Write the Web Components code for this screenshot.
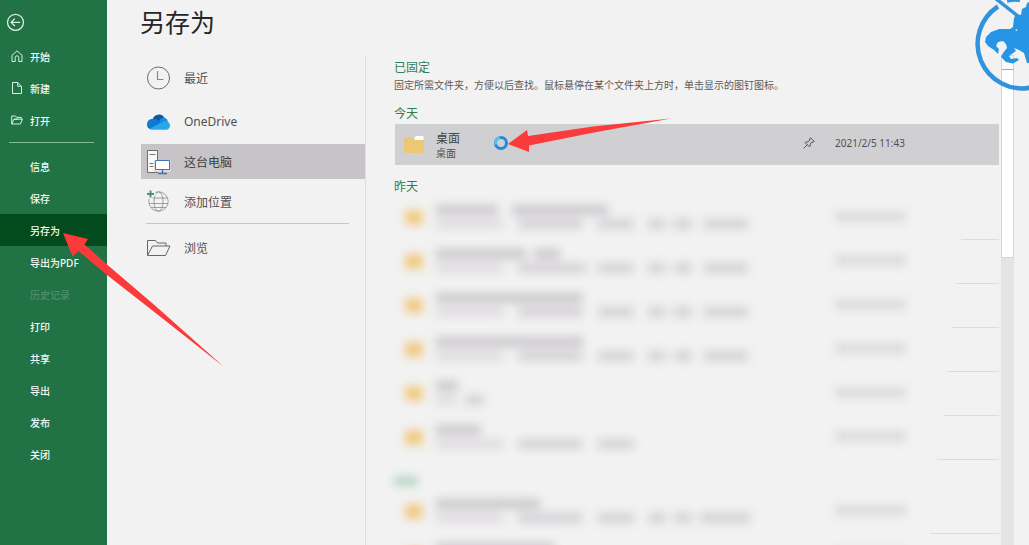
<!DOCTYPE html>
<html lang="zh-CN">
<head>
<meta charset="utf-8">
<meta name="viewport" content="width=device-width, initial-scale=1">
<title>另存为</title>
<style>
    body {
        margin: 0;
        background: #f2f2f2;
        font-family: "Noto Sans", "Noto Sans CJK SC", sans-serif;
    }
</style>
</head>
<body>
<save-backstage></save-backstage>

<script>
const define = (name, html, setup) => {
    const template = document.createElement('template');
    template.innerHTML = html;

    customElements.define(name, class extends HTMLElement {
        constructor() {
            super();
            this.attachShadow({ mode: 'open' });
            this.shadowRoot.appendChild(template.content.cloneNode(true));
        }

        connectedCallback() {
            if (setup) setup(this, this.shadowRoot);
        }
    });
};

// sidebar entry
define('nav-item', `
    <style>
        :host { display: block; }

        a {
            display: grid;
            grid-template-columns: 14px 1fr;
            gap: 6px;
            align-items: center;
            height: 32px;
            padding-left: 10px;
            color: #f4faf6;
            font-size: 10px;
            font-weight: 500;
            text-decoration: none;
            white-space: nowrap;
        }

        :host([selected]) a { background: #034a1c; }
        :host([disabled]) a { color: #4f8f6a; }
        ::slotted(svg) { display: block; }
        .label { grid-column: 2; }
    </style>
    <a href="#"><slot name="icon"></slot><span class="label"><slot></slot></span></a>
`, (host, root) => {
    const link = root.querySelector('a');
    if (host.hasAttribute('selected')) link.setAttribute('aria-current', 'page');
    if (host.hasAttribute('disabled')) link.setAttribute('aria-disabled', 'true');
});

define('side-nav', `
    <style>
        :host {
            display: block;
            background: #217346;
        }

        .back {
            display: block;
            width: 20px;
            height: 20px;
            margin: 12px 0 8px 5px;
            padding: 0;
            border: 0;
            background: none;
        }

        hr {
            margin: 6px 13px 7px 9px;
            border: 0;
            border-top: 1px solid #7fbf98;
        }

        svg { display: block; fill: none; stroke: #d9efe1; }
        nav { display: flow-root; }
    </style>
    <nav>
        <button class="back" aria-label="返回">
            <svg width="20" height="20" viewBox="0 0 20 20" stroke-width="1.3">
                <circle cx="10.5" cy="10.3" r="8"/>
                <path d="M15.2 10.3H6.2M9.8 6.6 6.1 10.3l3.7 3.7"/>
            </svg>
        </button>
        <nav-item>
            <svg slot="icon" width="14" height="14" viewBox="0 0 14 14" fill="none" stroke="#d9efe1">
                <path d="M2 6.3 7 1.8l5 4.5v6.2H8.8V8.6a1.8 1.8 0 0 0-3.6 0v3.9H2z"/>
            </svg>开始</nav-item>
        <nav-item>
            <svg slot="icon" width="14" height="14" viewBox="0 0 14 14" fill="none" stroke="#d9efe1">
                <path d="M2.5 1.5h5.2l3.8 3.8v7.2h-9zM7.7 1.5v3.8h3.8"/>
            </svg>新建</nav-item>
        <nav-item>
            <svg slot="icon" width="14" height="14" viewBox="0 0 14 14" fill="none" stroke="#d9efe1">
                <path d="M1.7 11V3h3.8l1.2 1.4h4.6v1.8M1.7 11l2.2-4.8h8.6L10.4 11zM4 6.2h3.2L8.4 5"/>
            </svg>打开</nav-item>
        <hr>
        <nav-item>信息</nav-item>
        <nav-item>保存</nav-item>
        <nav-item selected>另存为</nav-item>
        <nav-item>导出为PDF</nav-item>
        <nav-item disabled>历史记录</nav-item>
        <nav-item>打印</nav-item>
        <nav-item>共享</nav-item>
        <nav-item>导出</nav-item>
        <nav-item>发布</nav-item>
        <nav-item>关闭</nav-item>
    </nav>
`);

// save location
define('place-item', `
    <style>
        :host { display: block; }

        button {
            display: grid;
            grid-template-columns: 26px 1fr;
            gap: 12px;
            align-items: center;
            width: 100%;
            height: 35px;
            padding: 0 0 0 5px;
            border: 0;
            background: none;
            color: #505050;
            font: inherit;
            font-size: 12px;
            text-align: left;
        }

        :host([selected]) button { background: #c6c4c7; color: #404040; }
        ::slotted(svg) { display: block; }
    </style>
    <button><slot name="icon"></slot><span><slot></slot></span></button>
`);

define('place-list', `
    <style>
        :host {
            display: grid;
            align-content: start;
            gap: 5px;
            padding-top: 5px;
            border-right: 1px solid #dedede;
        }

        .recent { margin-bottom: 4px; }

        hr {
            width: calc(100% - 21px);
            box-sizing: border-box;
            margin: -1px 0 1px 5px;
            border: 0;
            border-top: 1px solid #c6c6c6;
        }
    </style>
    <place-item class="recent">
        <svg slot="icon" width="26" height="26" viewBox="0 0 26 26" fill="none" stroke="#6a6a6a">
            <circle cx="12.5" cy="13" r="11"/>
            <path d="M11.5 6v8.5h6" stroke="#8a8a8a" stroke-width="1.2"/>
        </svg>最近</place-item>
    <place-item>
        <svg slot="icon" width="26" height="26" viewBox="0 0 26 26">
            <path d="M6.5 10.5A6.5 6.5 0 0 1 18.5 9l-2 7z" fill="#0c59a4"/>
            <path d="M1 15.5a5.2 5.2 0 0 1 6-5.5c2-.5 3.500.2 5 1.200l6 5-13 4.300A5 5 0 0 1 1 15.500z" fill="#0f78d4"/>
            <path d="M13 12.5c1-3 3.500-4.300 6-3.500 1.600.5 2.500 1.800 2.700 3.500l.3 5z" fill="#1490df"/>
            <path d="M4 19.5 14.500 14l4-1.500a4.200 4.200 0 0 1 5.500 4c0 2.500-1.700 4.200-4 4.200H7c-1.200 0-2.200-.4-3-1.200z" fill="#28a8ea"/>
        </svg>OneDrive</place-item>
    <place-item selected>
        <svg slot="icon" width="26" height="26" viewBox="0 0 26 26">
            <path d="M1.5 1.5h10v22h-10z" fill="#f7f7f7" stroke="#6d6d6d"/>
            <path d="M3.5 5.5h6M3.5 14.5h4M3.5 17.5h4" stroke="#777" fill="none"/>
            <path d="M8 11.5h16.5V23H8z" fill="#dedede"/>
            <path d="M9.5 11.5h14v9h-14z" fill="#fff" stroke="#4472b5"/>
            <path d="M16.5 20.5V24M12 24.5h9" stroke="#4472b5" stroke-width="1.5" fill="none"/>
        </svg>这台电脑</place-item>
    <place-item>
        <svg slot="icon" width="26" height="26" viewBox="0 0 26 26" fill="none" stroke="#8c8c8c" stroke-width=".8">
            <circle cx="12.5" cy="12.5" r="9.7"/>
            <ellipse cx="12.5" cy="12.5" rx="4.5" ry="9.7"/>
            <path d="M3.5 9h18M3 14.5h19M5 18.5h15"/>
            <path d="M4.5 0v10M0 5h9.5" stroke="#f2f2f2" stroke-width="4"/>
            <path d="M4.5 1.5v7M1 5h7" stroke="#4f9472" stroke-width="2"/>
        </svg>添加位置</place-item>
    <hr>
    <place-item>
        <svg slot="icon" width="26" height="26" viewBox="0 0 26 26" fill="none" stroke="#666">
            <path d="M1.5 20V5.5h8l2 2.5h8.5v3M1.5 20.5l5-9.500h17.500l-4.500 9.500z"/>
        </svg>浏览</place-item>
`);

define('file-folder', `
    <style>
        :host { display: block; }
        svg { display: block; }
    </style>
    <svg width="20" height="18" viewBox="0 0 20 18">
        <path d="M10 3.5 12 1h7.5v5H10z" fill="#fffdf5"/>
        <path d="M0 2.5h9l2 2.5h9V17a1 1 0 0 1-1 1H1a1 1 0 0 1-1-1z" fill="#ecc775"/>
    </svg>
`);

define('file-row', `
    <style>
        :host { display: block; }

        .row {
            display: grid;
            grid-template-columns: 1fr 12px 164px;
            column-gap: 20px;
            align-items: center;
            height: 41px;
            background: #d0d0d2;
            color: #505050;
            font-size: 10px;
        }

        button {
            padding: 0;
            border: 0;
            background: none;
            color: inherit;
            font: inherit;
            text-align: left;
        }

        .file {
            display: grid;
            grid-template-columns: 20px 1fr;
            column-gap: 12px;
            align-items: center;
            padding-left: 9px;
        }

        .text { display: grid; line-height: 12px; }
        .name { color: #444; font-size: 12px; line-height: 16px; }
        file-folder { margin-bottom: 2px; }
        svg, time { display: block; margin-bottom: 3px; }
    </style>
    <div class="row">
        <button class="file">
            <file-folder></file-folder>
            <span class="text"><span class="name"><slot></slot></span><slot name="path"></slot></span>
        </button>
        <button aria-label="固定">
            <svg width="12" height="12" viewBox="0 0 12 12" fill="none" stroke="#555">
                <path d="M7.5.8 11.2 4.5 10 5.3 8.8 5.2 7.2 7v2.200l-.8.6L2.200 5.600l.7-.8H5L6.800 3.200 6.700 1.900zM4.300 7.700.6 11.400"/>
            </svg>
        </button>
        <time><slot name="date"></slot></time>
    </div>
`);

// row whose contents are hidden; title and path are "start-end" spans
define('masked-row', `
    <style>
        :host { display: block; }

        .row {
            display: grid;
            grid-template-columns: 20px 1fr 164px;
            column-gap: 12px;
            align-items: center;
            height: 43px;
            padding-left: 9px;
            border-bottom: 1px solid;
            border-image: linear-gradient(to left, #dcdcdc var(--rule, 50px), transparent 0) 1;
        }

        .folder { height: 15px; margin: 0 1px; background: #f2cb88; filter: blur(4px); }
        .lines { display: grid; gap: 4px; padding-bottom: 1px; filter: blur(5px); }
        .line { display: flex; height: 10px; }
        .line i { background: #cbc8cc; }
        .line + .line i { background: #d4d1d5; }
        .line + .line i:first-child { background: #dfdce0; }
        .date { width: 71px; height: 11px; margin-bottom: 3px; background: #dedbdf; filter: blur(4px); }
    </style>
    <div class="row" aria-hidden="true">
        <div class="folder"></div>
        <div class="lines"><div class="line"></div><div class="line"></div></div>
        <div class="date"></div>
    </div>
`, (host, root) => {
    const lines = root.querySelectorAll('.line');
    ['title', 'path'].forEach((name, i) => {
        let x = 0;
        lines[i].textContent = '';
        for (const part of host.getAttribute('mask-' + name).split(' ')) {
            const [start, end] = part.split('-').map(Number);
            const bar = document.createElement('i');
            bar.style.marginLeft = start - x + 'px';
            bar.style.width = end - start + 'px';
            lines[i].appendChild(bar);
            x = end;
        }
    });
    root.querySelector('.row').style.setProperty('--rule', host.getAttribute('rule') + 'px');
});

define('file-list', `
    <style>
        :host { display: block; min-width: 0; }

        h2 {
            margin: 0;
            color: #2f7d55;
            font-size: 12px;
            font-weight: 400;
            line-height: 18px;
        }

        p {
            margin: 0 0 12px;
            color: #5a5a5a;
            font-size: 10px;
            line-height: 16px;
        }

        file-row { margin: 1px 0 13px 1px; }
        masked-row { margin-left: 1px; }
        .mask { width: 24px; height: 10px; margin: 16px 0 4px; background: #bcd6c8; filter: blur(4px); }
    </style>
    <h2>已固定</h2>
    <p>固定所需文件夹，方便以后查找。鼠标悬停在某个文件夹上方时，单击显示的图钉图标。</p>
    <h2>今天</h2>
    <file-row>桌面<span slot="path">桌面</span><span slot="date">2021/2/5 11:43</span></file-row>
    <h2>昨天</h2>
    <masked-row rule="39" mask-title="0-62 76-172" mask-path="0-67 82-146 162-198 212-230 238-256 268-312"></masked-row>
    <masked-row rule="44" mask-title="0-90 98-124" mask-path="0-67 82-150 162-198 212-230 238-256 268-312"></masked-row>
    <masked-row rule="48" mask-title="0-147" mask-path="0-67 82-146 162-198 212-230 238-256 268-312"></masked-row>
    <masked-row rule="53" mask-title="0-147" mask-path="0-67 82-146 162-198 212-230 238-256 268-312"></masked-row>
    <masked-row rule="56" mask-title="0-22" mask-path="0-20 29-48"></masked-row>
    <masked-row rule="63" mask-title="0-45" mask-path="0-67 82-146 162-198"></masked-row>
    <div class="mask"></div>
    <masked-row rule="70" mask-title="0-104" mask-path="0-67 82-146 162-198 212-230 238-256 264-314"></masked-row>
    <masked-row rule="70" mask-title="0-118" mask-path="0-67 82-146 162-198"></masked-row>
`);

define('scroll-track', `
    <style>
        :host {
            display: grid;
            grid-template-rows: 15px 188px 1fr;
            background: #e4e4e4;
        }

        span { box-sizing: border-box; border: 1px solid #d6d6d6; background: #fff; }
        .up { border-bottom-color: #a8a8a8; background: #fafafa; }
        .thumb { border-top: 0; }
    </style>
    <span class="up"></span><span class="thumb"></span>
`);

// red pointers, busy cursor and the corner badge lie over the page
define('page-marks', `
    <style>
        :host {
            position: absolute;
            inset: 0;
            overflow: hidden;
            pointer-events: none;
        }

        svg { position: absolute; }
        .nav-arrow { left: 60px; top: 230px; }
        .busy { left: 493px; top: 135px; }
        .row-arrow { left: 505px; top: 115px; }
        .badge { right: 0; top: 0; }
    </style>
    <svg class="nav-arrow" width="166" height="140" viewBox="60 230 166 140">
        <path d="M63 233 88 239l-3.500 5.500L107 264.500l48 41 69 61.500-69-54.500-48-37.500-28.500-24-6 5.500z" fill="#fb3b3b"/>
    </svg>
    <svg class="busy" width="16" height="16" viewBox="0 0 16 16" fill="none">
        <circle cx="8" cy="8" r="5.5" stroke="#2389dc" stroke-width="3"/>
        <path d="M2.8 9.5A5.500 5.500 0 0 1 7 2.600" stroke="#56c5ec" stroke-width="2.5"/>
    </svg>
    <svg class="row-arrow" width="168" height="40" viewBox="505 115 168 40">
        <path d="M508 144 527 130l1 6 65-9.500 78-8-77 14-65 13V152z" fill="#fb3b3b"/>
    </svg>
    <svg class="badge" width="60" height="94" viewBox="969 0 60 94">
        <path d="M998 6.5A44.500 44.500 0 0 0 1031 87.500M1007 .5Q1014-1 1020 0" fill="none" stroke="#3193db" stroke-width="4.500"/>
        <path d="M994-2 1019 17" stroke="#f2f2f2" stroke-width="6"/>
        <path d="M995-2 1019 17" stroke="#3193db" stroke-width="3.500"/>
        <path d="M1029 2 1027 3 1026 7 1022 9 1021 15 1016 14 1014 18 1013 27 1010 29 999 29 991 32 986 37 985 42 988 46 994 50 998 54 999 49 996 46 998 42 1003 41 1006 44 1007 48 1003 53 1001 57 1006 62 1013 63.500 1019 60 1017 58 1011 59 1009 56 1016 51 1014 48 1019 50 1024 53 1027 63 1029 63z" fill="#2795e6"/>
        <circle cx="1016.5" cy="30" r="1" fill="#b5dcf5"/>
    </svg>
`);

define('save-backstage', `
    <style>
        :host {
            position: relative;
            display: grid;
            grid-template-columns: 107px 1fr;
            height: 100vh;
            overflow: hidden;
        }

        main {
            display: grid;
            grid-template-columns: 226px minmax(0, 1fr) 13px;
            grid-template-rows: 55px minmax(0, 1fr);
            min-height: 0;
            padding: 0 15px 0 33px;
        }

        h1 {
            grid-column: 1 / -1;
            margin: 0;
            color: #262626;
            font-size: 25px;
            font-weight: 400;
            line-height: 45px;
        }

        place-list { margin-left: 1px; }
        file-list { padding: 4px 2px 0 28px; overflow: hidden; }
    </style>
    <side-nav></side-nav>
    <main>
        <h1>另存为</h1>
        <place-list></place-list>
        <file-list></file-list>
        <scroll-track></scroll-track>
    </main>
    <page-marks></page-marks>
`);
</script>
</body>
</html>
